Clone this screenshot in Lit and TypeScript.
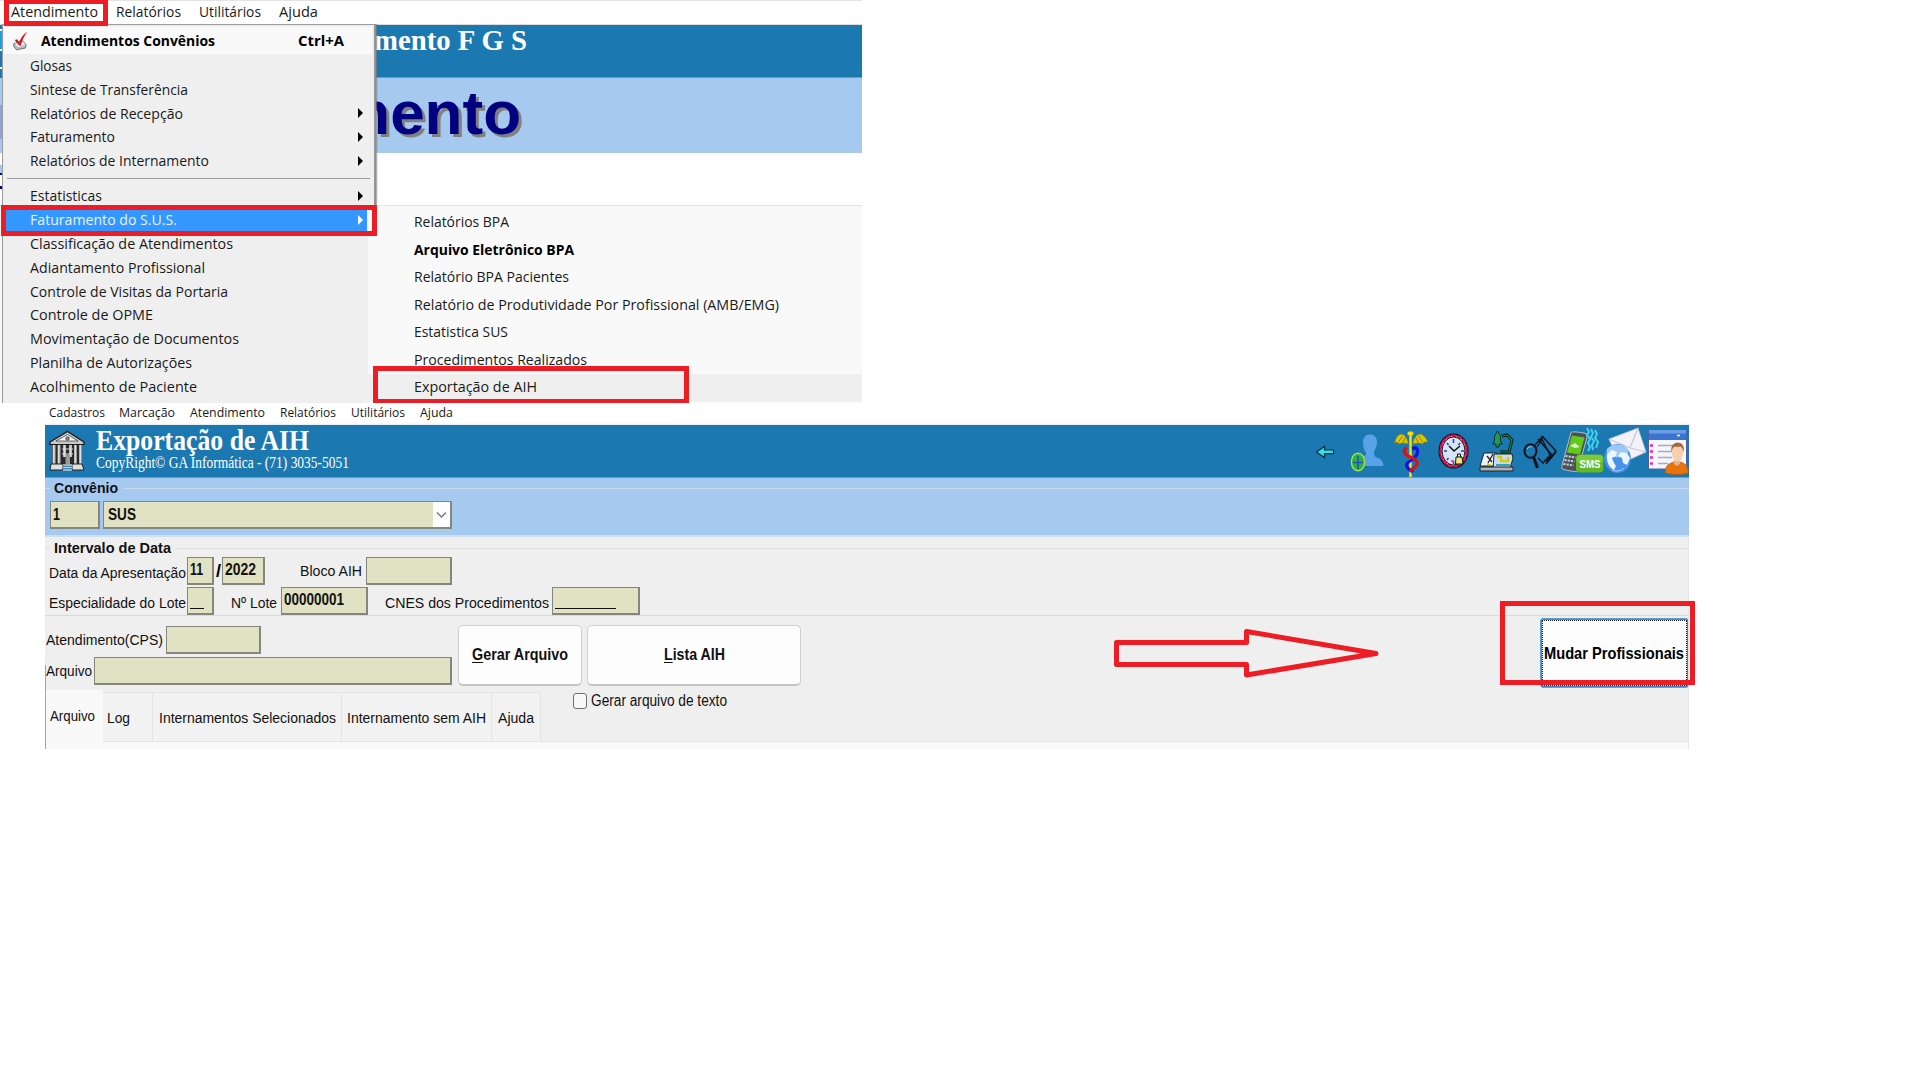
import { LitElement, html, svg, css } from "lit";
import { customElement, property } from "lit/decorators.js";

/** A single line of text condensed or widened to an exact width. */
@customElement("fit-text")
class FitText extends LitElement {
  @property({ type: Number }) w = 0;
  static styles = css`
    :host { display: block; white-space: nowrap; flex: none; }
    .t { display: inline-block; transform-origin: 0 50%; white-space: pre; }
    .box { display: block; height: 100%; }
  `;
  render() {
    return html`<div class="box" style="width:${this.w}px"><span class="t"><slot></slot></span></div>`;
  }
  firstUpdated() {
    const t = this.renderRoot.querySelector(".t") as HTMLElement;
    const natural = t.getBoundingClientRect().width;
    if (natural > 0 && this.w > 0) t.style.transform = `scaleX(${this.w / natural})`;
  }
}

const menuRows = [
  { label: "Glosas", w: 42 },
  { label: "Sintese de Transferência", w: 158 },
  { label: "Relatórios de Recepção", w: 153, sub: true },
  { label: "Faturamento", w: 85, sub: true },
  { label: "Relatórios de Internamento", w: 179, sub: true },
  { sep: true },
  { label: "Estatisticas", w: 72, sub: true },
  { label: "Faturamento do S.U.S.", w: 147, sub: true, active: true },
  { label: "Classificação de Atendimentos", w: 203 },
  { label: "Adiantamento Profissional", w: 175 },
  { label: "Controle de Visitas da Portaria", w: 198 },
  { label: "Controle de OPME", w: 123 },
  { label: "Movimentação de Documentos", w: 209 },
  { label: "Planilha de Autorizações", w: 162 },
  { label: "Acolhimento de Paciente", w: 167 },
] as { label?: string; w?: number; sub?: boolean; sep?: boolean; active?: boolean }[];

const subRows = [
  { label: "Relatórios BPA", w: 95 },
  { label: "Arquivo Eletrônico BPA", w: 160, bold: true },
  { label: "Relatório BPA Pacientes", w: 155 },
  { label: "Relatório de Produtividade Por Profissional (AMB/EMG)", w: 365 },
  { label: "Estatistica SUS", w: 94 },
  { label: "Procedimentos Realizados", w: 173 },
  { label: "Exportação de AIH", w: 123, hover: true },
] as { label: string; w: number; bold?: boolean; hover?: boolean }[];

const back = svg`<svg width="20" height="52" viewBox="16 10 20 52">
  <path d="M16.500 37 L24.500 31.500 V35 H33.500 V38.700 H24.500 V42.500Z" fill="#27e8ee" stroke="#062c3c" stroke-width="1.200"/></svg>`;

const user = svg`<svg width="36" height="52" viewBox="50 10 36 52">
  <path d="M63 27c0-5 3-7.500 7-7.500s7 2.500 7 7.500c0 4-1.500 7-3 9.500 0 4 .5 5 3 6 4 1.500 6 3.500 6.500 8.500H60V43c3-1.500 6-1.500 6-5-2-3-3-7-3-11z" fill="#58a3e8"/>
  <ellipse cx="58" cy="47" rx="6.600" ry="8.800" fill="#27b04b" stroke="#a4e23e" stroke-width="1.400"/>
  <path d="M53 47.500h10M58 41v13" stroke="#2b50b8" stroke-width="1.600"/></svg>`;

const caduceus = svg`<svg width="36" height="52" viewBox="93 10 36 52">
  <path d="M108.500 29c-1-5-3-10-8-10-3 1-5 4-6 9 3-1 4 0 4 1 3-1 7-1 10 0zM112.500 29c1-5 3-10 8-10 2 0 6 4 7.500 8-3 0-5 0-5 2-3-1-7-1-10.500 0z" fill="#d9c60c" stroke="#857806" stroke-width=".8"/>
  <path d="M98.500 27l4-6M102.500 28l3-6M122.500 27l-4-6M118.500 28l-3-6" stroke="#857806" stroke-width=".9"/>
  <ellipse cx="110.500" cy="18.500" rx="3.400" ry="2.400" fill="#f1dd10" stroke="#857806" stroke-width=".8"/>
  <path d="M110.500 20v46" stroke="#f1dd10" stroke-width="2.600"/>
  <path d="M111 33c-5-1-7 3-4 8 3 4 10 5 10 9s-8 5-8 9" transform="translate(0 -1)" fill="none" stroke="#1414e0" stroke-width="0"/>
  <path d="M113 33c6-1 6 6 1 10s-9 5-7 9c1.500 3 4 3 6 5" fill="none" stroke="#1414e0" stroke-width="3.200"/>
  <path d="M112 34c6-2 5-1 0 0" fill="none" stroke="#1414e0" stroke-width="3.200"/>
  <path d="M107 33c-5 2-3 6 3 9 6 2 9 5 6 9-2 2-5 3-6 6" fill="none" stroke="#e01010" stroke-width="3.200"/></svg>`;

const clock = svg`<svg width="33" height="52" viewBox="137 10 33 52">
  <ellipse cx="153.500" cy="36" rx="15" ry="17.600" fill="#111"/>
  <ellipse cx="153.500" cy="36" rx="12.800" ry="15.300" fill="#d3e7f6" stroke="#ee0f5c" stroke-width="2.600" stroke-dasharray="5 .8"/>
  <ellipse cx="153.500" cy="36" rx="11.400" ry="14" fill="none" stroke="#111" stroke-width=".9"/>
  <path d="M153.500 24v4M153.500 46v3M144 36h3M161 36h3M147 28l1.500 2M147 45l1.500-2M160 28l-1.500 2" stroke="#2d3db0" stroke-width="1.500"/>
  <path d="M149 31l5 5 6-5" fill="none" stroke="#111" stroke-width="1.500"/>
  <path d="M156 42h6l1 7h-7.500z" fill="#f1ea78" stroke="#111" stroke-width="1"/>
  <path d="M157.500 42v-3h3v3" fill="none" stroke="#111"/>
  <path d="M151 46h3" stroke="#e73fd0" stroke-width="2"/></svg>`;

const lab = svg`<svg width="36" height="52" viewBox="-11 10 36 52">
  <path d="M7.500 16l3 5v5l2 3H9v3H6v-3H2.500l2-3v-5z" fill="#1d9a5a" stroke="#052a18" stroke-width=".9"/>
  <path d="M12 21l5-1 5 5-3 12h-9" fill="none" stroke="#041c14" stroke-width="3"/>
  <path d="M12 21l5-1 5 5-3 12h-9" fill="none" stroke="#168a52" stroke-width="1.100"/>
  <path d="M-6 38h13l-3 13h-14z" fill="#eef4f8" stroke="#222" stroke-width="1"/>
  <path d="M4 39h18l1 4-3 11H3z" fill="#c9dde6" stroke="#222" stroke-width="1"/>
  <path d="M-10 52h33v4h-33z" fill="#a5b4c0" stroke="#222" stroke-width="1"/>
  <path d="M-3 41l5 6M3 39l-5 9" stroke="#222" stroke-width="1.300"/>
  <path d="M7 42h4v4h7v-4" fill="none" stroke="#d9c811" stroke-width="2.400"/>
  <path d="M6 50h14" stroke="#28a4c8" stroke-width="2"/><path d="M-3 49l4 1" stroke="#d9c811" stroke-width="1.500"/></svg>`;

const search = svg`<svg width="36" height="52" viewBox="32 10 36 52">
  <path d="M52 21l14 15-6 8M48 24l14 16-6 7" fill="none" stroke="#06141c" stroke-width="1.500"/>
  <path d="M45 30l8-9M47 32l5-8 8 16-7 8-5-5M56 49l10-12" fill="none" stroke="#06141c" stroke-width="1.300"/>
  <ellipse cx="40.500" cy="36" rx="6" ry="6.800" fill="#1c78b0" stroke="#06141c" stroke-width="2"/>
  <path d="M37 34c1-2 3-3 5-2" stroke="#9fd0ee" fill="none"/>
  <path d="M43.500 42l4 11" stroke="#06141c" stroke-width="3"/></svg>`;

const sms = svg`<svg class="sms" width="45" height="52" viewBox="70 10 45 52">
  <path d="M81 17.500c1-1.500 13 0 15.500 1.500 1 1 .5 3 0 5l-9 32c-.5 1.500-14-1-15.500-2.500-.5-1 0-3 .5-4.500z" fill="#4b5257" stroke="#c3ccd0" stroke-width=".9"/>
  <path d="M82 20.500l12.500 2-4.500 17-13-2z" fill="#62c81e"/>
  <path d="M80 31l5-3 5 4-5 1z" fill="#d6f5b8"/>
  <path d="M75.500 41l10 1.500M74.500 45l10 1.500M73.500 49l10 1.500" stroke="#c9cfd2" stroke-width="2" stroke-dasharray="2.200 1"/>
  <rect x="86" y="39.500" width="27.500" height="18" rx="4" fill="#62b81f"/>
  <rect x="86.500" y="40" width="26.500" height="8" rx="4" fill="#7dcc36"/>
  <text class="smstext" x="89.500" y="52.500" textLength="21" lengthAdjust="spacingAndGlyphs">SMS</text>
  <path d="M97 13l2 4-2 3 3 4-2 4 2 4-2 4M101 14l2 4-2 4 3 4-2 4 1 5M105 15l2 4-2 4 3 4-2 6" fill="none" stroke="#3fd2ee" stroke-width="2"/></svg>`;

const mail = svg`<svg width="44" height="52" viewBox="113 10 44 52">
  <path d="M119 24l29-11 8 24-26 12z" fill="#f3f2f8" stroke="#bcbcd0" stroke-width=".8"/>
  <path d="M119 24l21 9 8-20M140 33l16 4" fill="none" stroke="#c8c6d8" stroke-width="1.200"/>
  <ellipse cx="127.500" cy="43.500" rx="13.300" ry="14.600" fill="#4592e8"/>
  <ellipse cx="127.500" cy="36" rx="11" ry="6.500" fill="#b9dafa" opacity=".75"/>
  <path d="M117 39l5-4 5 2-1 4-4 2 2 5 2 3-2 4c-4-2-8-7-7-16zM131 37l6 1 3 5-3 7-4-2-1-5-4-2z" fill="#eaf5ff"/>
  <path d="M122 55c4 2 9 1 12-2" fill="none" stroke="#a9d6ff"/></svg>`;

const list = svg`<svg width="42" height="52" viewBox="157 10 42 52">
  <rect x="158.500" y="14.500" width="38" height="39.500" fill="#f5f5fb" stroke="#4c5fa8"/>
  <rect x="159" y="15" width="37" height="10" fill="#3b74cf"/><rect x="159" y="15" width="37" height="3.500" fill="#6a9de6"/>
  <path d="M187 20.500h3" stroke="#fff" stroke-width="1.500"/>
  <path d="M168 30.500h18M168 36.500h16M168 42.500h14M168 48.500h10" stroke="#a9abb5" stroke-width="1.600"/>
  <path d="M160 30.500h3M160 36.500h3M160 42.500h3M160 48.500h3" stroke="#d631b6" stroke-width="2.400"/>
  <path d="M175 58c0-7 4-10 9-11h6c5 1 8 4 8.500 11-6 2-17 2-23.500 0z" fill="#e8720c" stroke="#b04e04" stroke-width=".6"/>
  <path d="M184 45h6v4l-3 2-3-2z" fill="#e6b48c"/>
  <ellipse cx="187.500" cy="38" rx="5.500" ry="8.500" fill="#f6cfae"/>
  <path d="M181.500 37c-1-6 2-9.500 6-9.500s7.500 3 6 9.500c-1-3-2-5-3-5.500-3 1-5 0-6.500.5-1.500 1-2 3-2.500 5z" fill="#a8683a"/></svg>`;

const building = svg`<svg class="building" width="36" height="52" viewBox="19 25 36 52">
  <path d="M20 42l17.500-10.500L54 42v2.500H20z" fill="#c8c8c8" stroke="#111" stroke-width="1.200"/>
  <path d="M26 41l11.500-6.500L48 41z" fill="#f4f4f4" stroke="#333" stroke-width=".7"/>
  <circle cx="37.500" cy="38.500" r="1.800" fill="#888" stroke="#222" stroke-width=".6"/>
  <rect x="22" y="44.500" width="30" height="20" fill="#2b2b2b"/>
  <path d="M24 45v19M29 45v19M34.500 45v12M40.500 45v12M45.500 45v19M50.500 45v19" stroke="#dedede" stroke-width="2.600"/>
  <path d="M25 45v19M30 45v19M46.500 45v19M51.500 45v19" stroke="#8d8d8d" stroke-width=".8"/>
  <path d="M35.500 64v-9h4.500v9z" fill="#999"/>
  <path d="M32 49h11M32 54h11" stroke="#d9d9d9" stroke-width="1.200"/>
  <path d="M21 64h12v6H20zM42 64h10l2 6H42z" fill="#e0e0e0" stroke="#222" stroke-width="1"/>
  <path d="M33 65h9M33 67.500h9M33 70h9" stroke="#c9c9c9" stroke-width="1.400"/></svg>`;

@customElement("app-root")
class AppRoot extends LitElement {
  static styles = css`
    :host { display: block; width: 1920px; height: 1080px; background: #fff; overflow: hidden; position: relative;
      font-family: "Liberation Sans", Arial, sans-serif; color: #111; }
    * { box-sizing: border-box; }
    .red { position: absolute; border: 5px solid #ee1c24; }

    /* upper window */
    .upper { position: relative; width: 862px; height: 403px; overflow: hidden; background: #fff; }
    .segoe { font-family: "Open Sans", "Noto Sans", sans-serif; color: #1a1a1a; font-size: 14px; }
    .bar { height: 25px; border-top: 1px solid #e3e3e3; border-bottom: 1px solid #dcdcdc; line-height: 22px; display: grid; padding-left: 10.500px;
      grid-template-columns: 105px 83px 80px 60px; }
    .head { height: 53px; background: #1c78b0; border-bottom: 1px solid #5f9fce; padding-left: 374px;
      font: bold 30px/30px "Liberation Serif", "Times New Roman", serif; color: #fff; }
    .band { height: 75px; background: #a6c9f0; padding-left: 335px; font-weight: bold; font-size: 61px; line-height: 71px; color: #000080;
      text-shadow: 3px 3px 0 #808080; }
    .gap { height: 52px; }
    .sub { height: 198px; border-top: 1px solid #e3e3e3; background: #f9f9f9; padding: 3px 0 0 368px; }
    .srow { height: 27.500px; line-height: 25.500px; padding-left: 46px; }
    .srow.hover { background: #efefef; }
    .b { font-weight: bold; color: #000; }

    .menu { position: absolute; left: 2px; top: 24px; width: 366px; height: 379px; background: #efefef; border-left: 1px solid #9a9a9a; }
    .menuside { position: absolute; left: 368px; top: 24px; width: 10px; height: 181px; background: linear-gradient(90deg, #efefef 0 6px, #969696 6px 7px, #8b8b8b 8px, rgba(90,90,90,.25) 9px, rgba(90,90,90,0) 10px); }
    .menutop { position: absolute; left: 2px; top: 24px; width: 373px; height: 1px; background: #9a9a9a; }
    .mfirst { height: 30px; margin: 0 0 0 1px; padding-left: 8px; display: flex; align-items: center; background: #f9f9f9; border-top: 3px solid #efefef; width: 368px; font-size: 14.300px; line-height: 18px; }
    .tick { width: 16px; height: 20px; margin-right: 13px; }
    .key { margin-left: 83px; }
    .mrow { height: 23.800px; line-height: 23.800px; padding-left: 26.500px; display: flex; align-items: center; justify-content: space-between; }
    .mrow .arr { width: 0; height: 0; border: 5px solid transparent; border-left-color: #000; border-right: 0; margin-right: 5px; }
    .mrow.active { color: #e9f3ff; background: linear-gradient(#3397ff, #3397ff) 3px 0 / 361px 24px no-repeat; }
    .mrow.active .arr { border-left-color: #fff; }
    .sep { height: 11.500px; padding-top: 5px; margin-left: 4px; width: 363px; }
    .sep i { display: block; height: 1px; background: #9a9a9a; }
    .edge { position: absolute; left: 0; top: 25px; width: 2px; height: 180px;
      background: linear-gradient(#1c78b0 0 4px, #fff 4px 6px, #1c9fe0 6px 24px, #fff 24px 26px, #1c78b0 26px 42px, #fff 42px 44px, #1c78b0 44px 53px,
        #a6c9f0 53px 80px, #8ea4d8 80px 114px, #a6c9f0 114px 128px, #fff 128px 140px, #a6c9f0 140px 148px, #000080 148px 150px, #fff 150px 161px, #000080 161px 164px, #fff 164px); }

    /* lower window */
    .lower { position: relative; margin-left: 45px; width: 1644px; height: 346px; background: #efefef; }
    .bar2 { height: 22px; background: linear-gradient(#fff 0 20px, #e2ebf2 22px); line-height: 18px; font-size: 13.500px; display: grid; padding-left: 4px;
      grid-template-columns: 70px 70.500px 90px 71.500px 68.500px 60px; }
    .head2 { height: 53px; background: #1c78b0; border-bottom: 1px solid #5f9fce; display: flex; padding-left: 4px;
      font-family: "Liberation Serif", "Times New Roman", serif; color: #fff; }
    .titles { margin-left: 11px; }
    .title { font-weight: bold; font-size: 30px; line-height: 30px; height: 30px; }
    .copy { font-size: 16px; line-height: 16px; height: 16px; }
    .tools { margin-left: auto; display: flex; }
    .tools svg, .building { display: block; flex: none; }
    .tools .sms { margin-right: -2px; }
    .smstext { font: bold 11.500px "Liberation Sans", sans-serif; fill: #fff; }
    .g1 { margin-left: 14px; } .g2 { margin-left: 7px; } .g3 { margin-left: 8px; } .g4 { margin-left: 9px; } .g5 { margin-left: 7px; }
    .g6 { margin-left: 2px; }
    .conv { height: 59px; background: #a6c9f0; border-bottom: 2px solid #cfdff0; }
    .legend { display: grid; grid-template-columns: 5px auto 1fr; align-items: center; height: 20px; line-height: 20px; font-weight: bold; font-size: 15px; }
    .legend fit-text { margin: 0 5px 0 4px; }
    .legend i { height: 1px; background: #dcdcdc; }
    .conv .legend i { background: #c9d9ea; }
    .fld { height: 28px; border: 2px solid #85867c; border-top-width: 1.500px; border-left-width: 1.500px; background: #e1e2c3; line-height: 24px; font-weight: bold; font-size: 16px; padding-left: 2px; display: flex; }
    .crow { display: grid; grid-template-columns: 50px 349px; column-gap: 3px; padding: 3px 0 0 5px; line-height: 25px; }
    .crow .fld { line-height: 26px; }
    .combo { justify-content: space-between; padding-left: 4px; }
    .drop { width: 17px; height: 25px; background: #fdfdfd; display: block; }
    .interval { height: 79px; border-bottom: 1px solid #dadada; padding-top: 1px; font-size: 15.500px; }
    .r1, .r2 { display: grid; align-items: start; line-height: 28px; padding-left: 4px; height: 28px; }
    .r1 { margin-top: -1px; grid-template-columns: 138px 27px 8px 43px 35px 66px 86px; }
    .r2 { margin-top: 2px; grid-template-columns: 138px 27px 17px 50px 87px 17px 167px 88px; }
    .dn { padding-top: 2px; }
    .slash { font-weight: bold; font-size: 18px; padding-left: 2px; color: #000; }
    .blank { margin-top: 20px; height: 1px; background: #111; }
    .bl2 { width: 14px; } .bl7 { width: 61px; }
    .act { display: flex; height: 73px; }
    .files { width: 408px; padding-top: 10px; font-size: 15.500px; line-height: 27px; }
    .fr { display: grid; padding-left: 1px; height: 28px; }
    .fr1 { grid-template-columns: 120px 95px; }
    .fr2 { grid-template-columns: 48px 358px; margin-top: 3px; }
    .btn { margin: 9px 0 0 5px; height: 61px; background: #fdfdfd; border: 1px solid #cfcfcf; border-bottom: 2px solid #c4c4c4; border-radius: 5px;
      display: flex; align-items: center; justify-content: center; font-weight: bold; font-size: 16px; line-height: 20px; flex: none; }
    .gerar { width: 124px; } .lista { width: 214px; }
    .btn u { text-decoration-thickness: 1px; text-underline-offset: 2px; }
    .mudar { margin: 2px 0 0 auto; width: 149px; height: 70px; border: 2px solid #3488ca; border-radius: 4px; outline: 1px solid rgba(120,180,225,.6); outline-offset: -1px; background: #fdfdfd; color: #000;
      font-weight: bold; font-size: 16.500px; line-height: 20px; }
    .dots { height: 100%; width: 100%; border: 1px dotted #222; display: flex; align-items: center; justify-content: center; padding: 0 2px 1px 0; }
    .tabsrow { display: flex; margin-top: 1px; height: 52px; border-bottom: 1px solid #e4e4e4; font-size: 15.500px; line-height: 20px; }
    .tab { margin-top: 2px; background: #f2f2f2; border: 1px solid #e4e4e4; border-left: 0; height: 50px; padding: 15px 0 0 5px; }
    .tab.on { margin: 0; background: #f9f9f9; border: 0; height: 52px; width: 58px; padding-top: 15.500px; padding-left: 4.500px; }
    .tab.t1 { width: 50px; padding-left: 4px; } .tab.t2 { width: 189px; padding-left: 5.500px; } .tab.t3 { width: 150px; } .tab.t4 { width: 49px; padding-left: 6px; }
    .chk { margin-left: 32px; display: flex; gap: 4px; height: 20px; margin-top: 0.500px; font-size: 16px; }
    .box { width: 14px; height: 16px; border: 1.500px solid #707070; border-radius: 3px; background: #f8f8f8; margin-top: 2px; }
    .panel { height: 7px; background: #f9f9f9; }
    .blue { position: absolute; left: 0; top: 262px; width: 1px; height: 84px; background: #7fa9e0; }
    .right { position: absolute; right: 0; top: 134px; width: 1px; height: 212px; background: #e6e6e6; }

    .box-a { left: 4px; top: -1px; width: 104px; height: 27px; }
    .box-b { left: 1px; top: 205px; width: 376px; height: 31px; }
    .box-c { left: 373px; top: 366px; width: 316px; height: 37px; border-bottom-width: 4px; }
    .box-d { left: 1500px; top: 601px; width: 195px; height: 84px; }
    .arrow { position: absolute; left: 1110px; top: 625px; }
  `;

  render() {
    return html`
      <div class="upper">
        <div class="bar segoe">
          <fit-text .w=${87}>Atendimento</fit-text><fit-text .w=${65}>Relatórios</fit-text>
          <fit-text .w=${62}>Utilitários</fit-text><fit-text .w=${39}>Ajuda</fit-text>
        </div>
        <div class="head"><fit-text .w=${153}>mento F G S</fit-text></div>
        <div class="band"><fit-text .w=${186}>mento</fit-text></div>
        <div class="gap"></div>
        <div class="sub segoe">
          ${subRows.map((r) => html`<div class="srow ${r.hover ? "hover" : ""} ${r.bold ? "b" : ""}"><fit-text .w=${r.w}>${r.label}</fit-text></div>`)}
        </div>
        <div class="edge"></div>
        <div class="menuside"></div>
        <div class="menu segoe">
          <div class="mfirst b">
            <svg class="tick" viewBox="0 0 18 22">
              <path d="M2 14l9-4 5 5-1 4-10 2-3-4z" fill="#b9b9b9" stroke="#6d6d6d"/>
              <path d="M3 14l8-3 4 4-8 3z" fill="#f0f0f0"/>
              <path d="M3 10l3-1 2 4C10 8 12 4 17 1c-3 4-6 10-7 15H8z" fill="#d01820"/>
            </svg>
            <fit-text .w=${174}>Atendimentos Convênios</fit-text>
            <fit-text class="key" .w=${46}>Ctrl+A</fit-text>
          </div>
          ${menuRows.map((r) => r.sep
            ? html`<div class="sep"><i></i></div>`
            : html`<div class="mrow ${r.active ? "active" : ""}"><fit-text .w=${r.w!}>${r.label}</fit-text>${r.sub ? html`<span class="arr"></span>` : ""}</div>`)}
        </div>
        <div class="menutop"></div>
        <div class="red box-a"></div>
        <div class="red box-b"></div>
        <div class="red box-c"></div>
      </div>

      <div class="lower">
        <div class="bar2 segoe">
          <fit-text .w=${56}>Cadastros</fit-text><fit-text .w=${56}>Marcação</fit-text><fit-text .w=${75}>Atendimento</fit-text>
          <fit-text .w=${56}>Relatórios</fit-text><fit-text .w=${54}>Utilitários</fit-text><fit-text .w=${33}>Ajuda</fit-text>
        </div>
        <div class="head2">
          ${building}
          <div class="titles">
            <div class="title"><fit-text .w=${213}>Exportação de AIH</fit-text></div>
            <div class="copy"><fit-text .w=${253}>CopyRight© GA Informática - (71) 3035-5051</fit-text></div>
          </div>
          <div class="tools">
            ${back}<span class="g1"></span>${user}<span class="g2"></span>${caduceus}<span class="g3"></span>${clock}<span class="g4"></span>${lab}<span class="g5"></span>${search}<span class="g6"></span>${sms}${mail}${list}
          </div>
        </div>
        <div class="conv">
          <div class="legend"><i></i><fit-text .w=${64}>Convênio</fit-text><i></i></div>
          <div class="crow">
            <div class="fld"><fit-text .w=${7}>1</fit-text></div>
            <div class="fld combo"><fit-text .w=${28}>SUS</fit-text>
              <svg class="drop" viewBox="0 0 17 25"><path d="M4 10.500l4.500 4.500 4.500-4.500" fill="none" stroke="#777" stroke-width="1.300"/></svg></div>
          </div>
        </div>
        <div class="interval">
          <div class="legend"><i></i><fit-text .w=${117}>Intervalo de Data</fit-text><i></i></div>
          <div class="r1">
            <fit-text class="dn" .w=${137}>Data da Apresentação</fit-text>
            <div class="fld"><fit-text .w=${13}>11</fit-text></div>
            <span class="slash">/</span>
            <div class="fld"><fit-text .w=${31}>2022</fit-text></div>
            <span></span>
            <fit-text .w=${62}>Bloco AIH</fit-text>
            <div class="fld"></div>
          </div>
          <div class="r2">
            <fit-text class="dn" .w=${137}>Especialidade do Lote</fit-text>
            <div class="fld"><span class="blank bl2"></span></div>
            <span></span>
            <fit-text class="dn" .w=${46}>Nº Lote</fit-text>
            <div class="fld"><fit-text .w=${60}>00000001</fit-text></div>
            <span></span>
            <fit-text class="dn" .w=${164}>CNES dos Procedimentos</fit-text>
            <div class="fld"><span class="blank bl7"></span></div>
          </div>
        </div>
        <div class="act">
          <div class="files">
            <div class="fr fr1"><fit-text .w=${117}>Atendimento(CPS)</fit-text><div class="fld"></div></div>
            <div class="fr fr2"><fit-text .w=${46}>Arquivo</fit-text><div class="fld"></div></div>
          </div>
          <div class="btn gerar"><fit-text .w=${96}><u>G</u>erar Arquivo</fit-text></div>
          <div class="btn lista"><fit-text .w=${61}><u>L</u>ista AIH</fit-text></div>
          <div class="mudar"><div class="dots"><fit-text .w=${140}>Mudar Profissionais</fit-text></div></div>
        </div>
        <div class="tabsrow">
          <div class="tab on"><fit-text .w=${45}>Arquivo</fit-text></div>
          <div class="tab t1"><fit-text .w=${23}>Log</fit-text></div>
          <div class="tab t2"><fit-text .w=${177}>Internamentos Selecionados</fit-text></div>
          <div class="tab t3"><fit-text .w=${139}>Internamento sem AIH</fit-text></div>
          <div class="tab t4"><fit-text .w=${36}>Ajuda</fit-text></div>
          <div class="chk"><span class="box"></span><fit-text .w=${136}>Gerar arquivo de texto</fit-text></div>
        </div>
        <div class="panel"></div>
        <div class="blue"></div>
        <div class="right"></div>
      </div>

      <svg class="arrow" width="276" height="56" viewBox="1110 625 276 56">
        <path d="M1116.500 642.500H1246.500V631.500L1376 653.500L1246.500 675V664.500H1116.500Z" fill="none" stroke="#ee1c24" stroke-width="5" stroke-linejoin="round"/>
      </svg>
      <div class="red box-d"></div>
    `;
  }
}
